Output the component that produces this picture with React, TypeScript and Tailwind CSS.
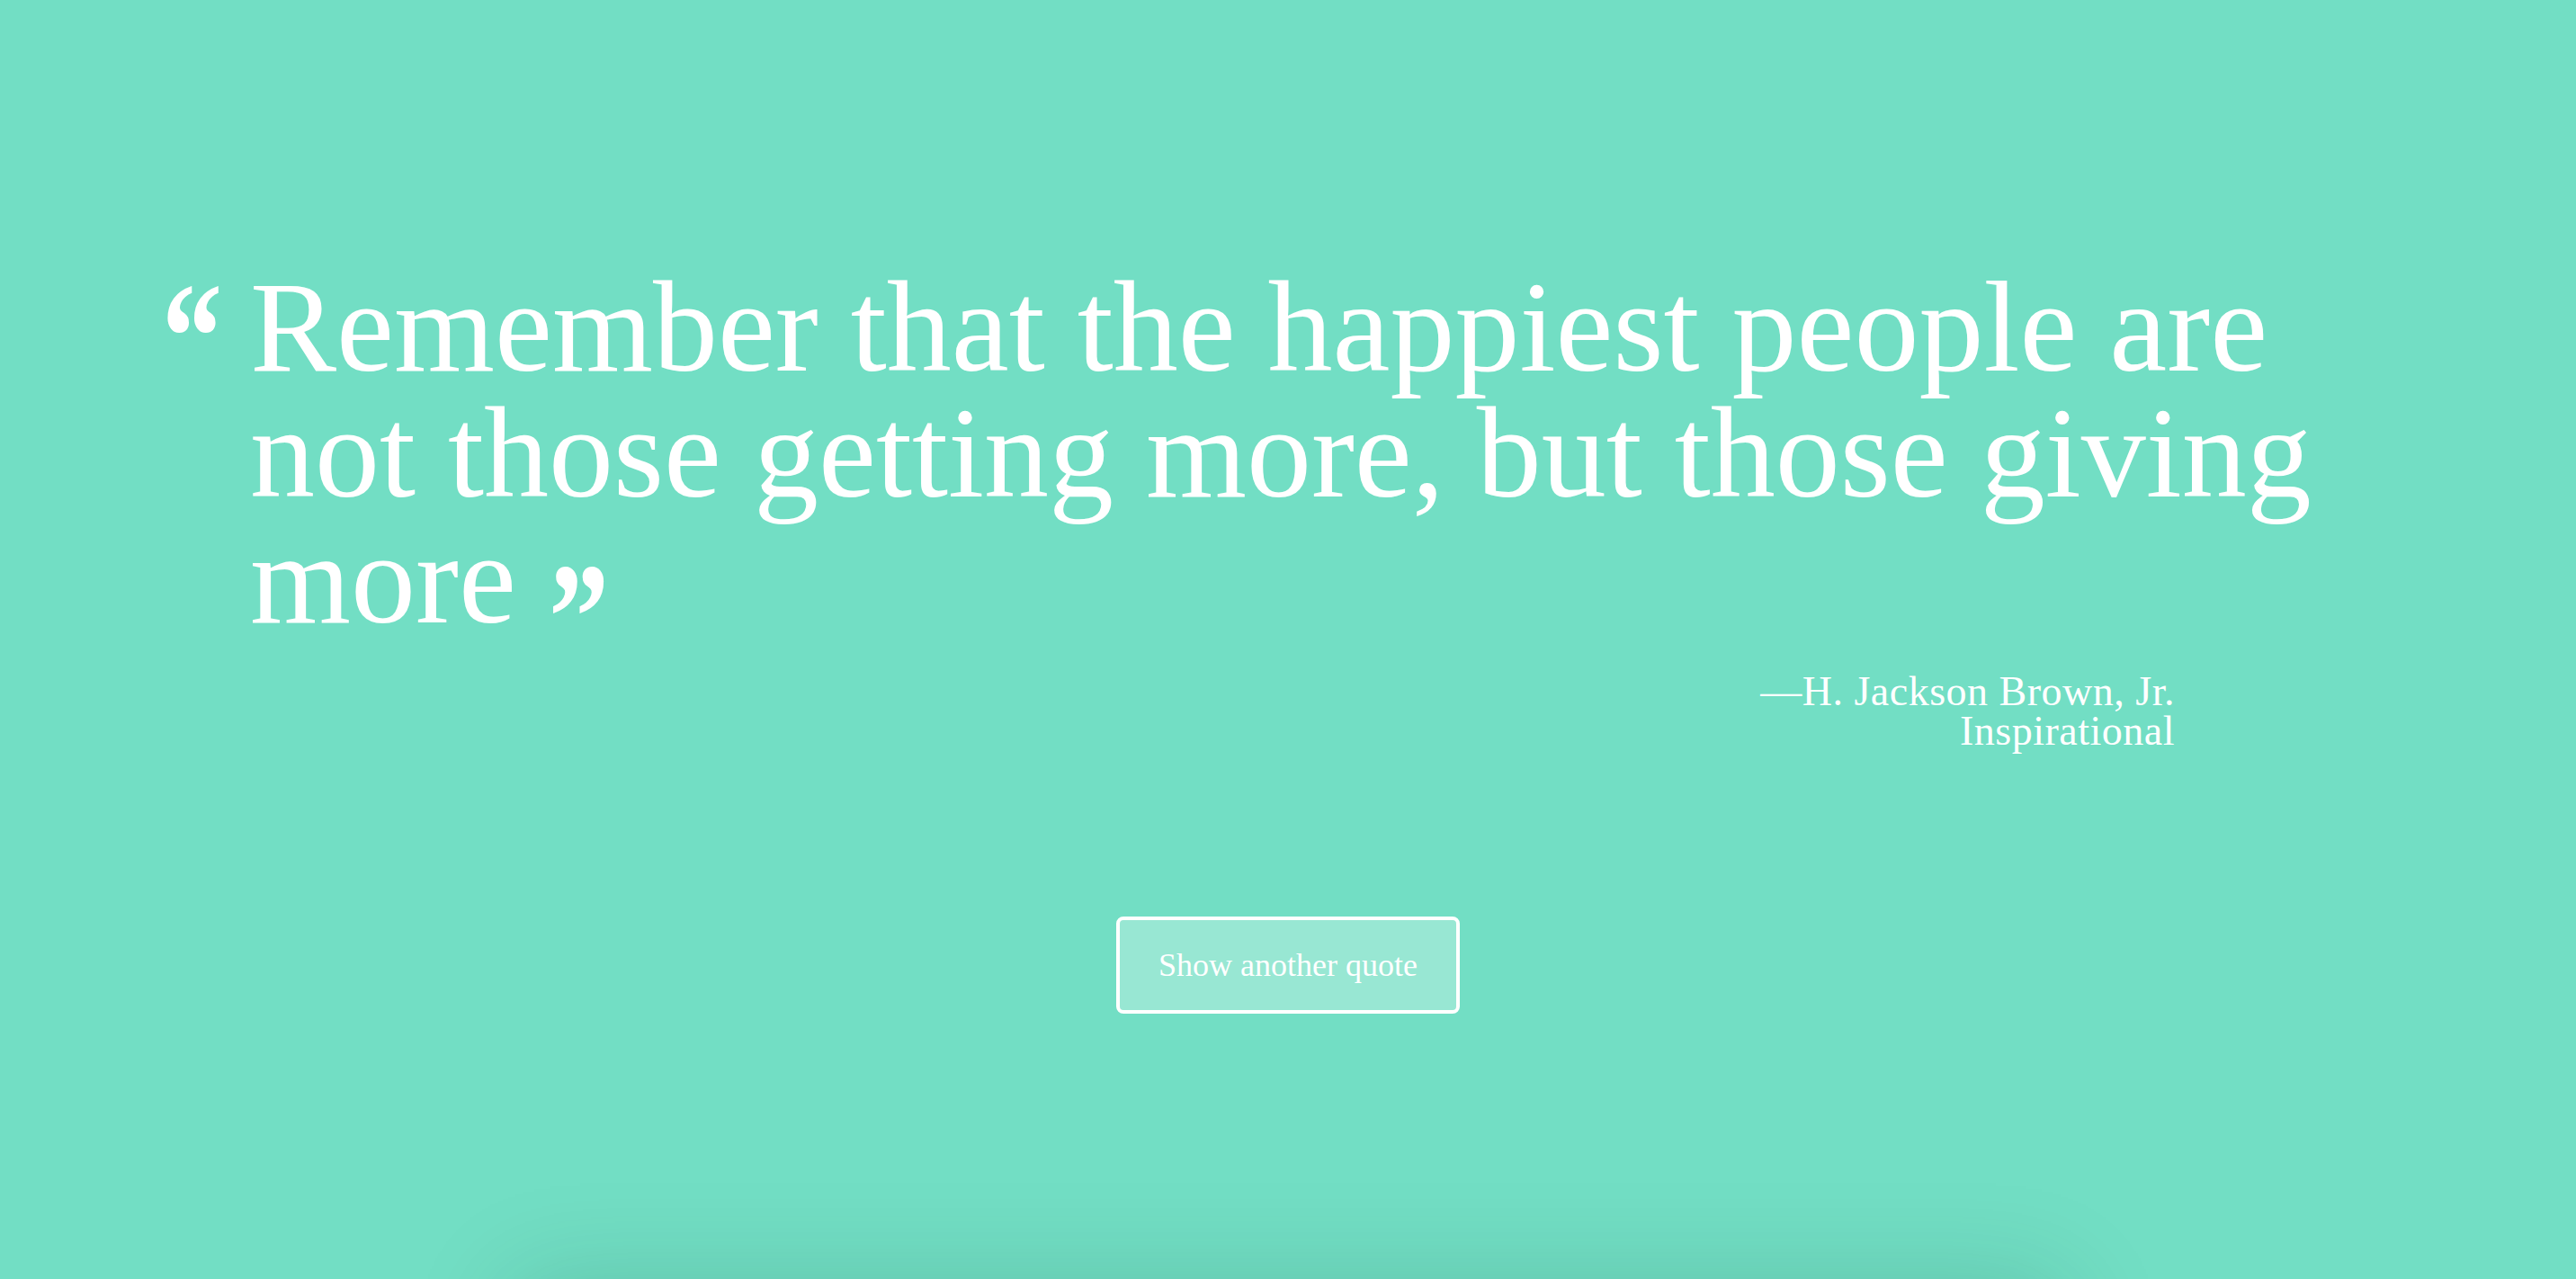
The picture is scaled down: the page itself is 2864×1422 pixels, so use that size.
const serif = { fontFamily: '"Liberation Serif", "DejaVu Serif", serif' };

export default function App() {
  return (
    <div className="min-h-screen bg-[#72dec4] text-white overflow-hidden" style={serif}>
      <div className="pt-[294px] pl-[180px]">
        {/* Quote */}
        <div className="flex">
          <div className="w-[98px] shrink-0 -mt-[6px] text-[172px] leading-none font-bold">
            <span className="inline-block origin-left scale-x-[0.78]">&ldquo;</span>
          </div>
          <blockquote className="text-[144px] leading-[140px] whitespace-nowrap">
            <div>Remember that the happiest people are</div>
            <div>not those getting more, but those giving</div>
            <div>
              more{' '}
              <span className="inline-block origin-left scale-x-[0.78] text-[172px] leading-[0] font-bold align-[-52px]">
                &rdquo;
              </span>
            </div>
          </blockquote>
        </div>

        {/* Attribution */}
        <div className="mt-[33px] w-[2238px] text-right text-[46px] leading-[44px] tracking-[0.5px]">
          <div>&mdash;H. Jackson Brown, Jr.</div>
          <div>Inspirational</div>
        </div>
      </div>

      <div className="flex justify-center mt-[184px]">
        <button className="h-[108px] px-[43px] border-[4px] border-white rounded-[8px] bg-[#98e7d3] text-[36px] text-white">
          Show another quote
        </button>
      </div>

      <div className="mx-auto mt-[303px] w-[60%] h-[400px] bg-[#72dec4] shadow-[0_0_110px_rgba(0,60,40,0.18)]" />
    </div>
  );
}
